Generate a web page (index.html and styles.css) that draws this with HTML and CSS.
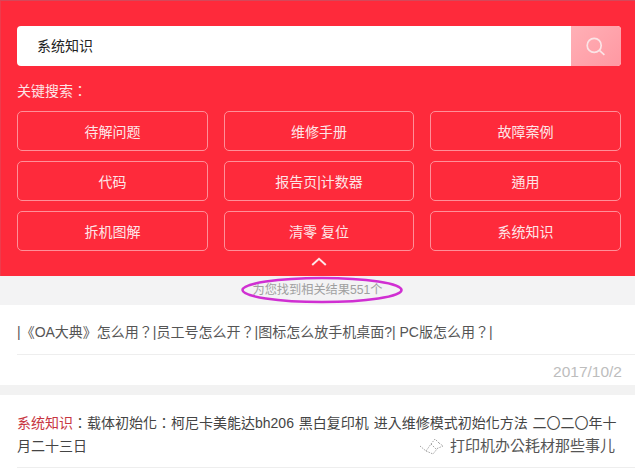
FILE: index.html
```
<!DOCTYPE html>
<html lang="zh-Hant">
<head>
<meta charset="utf-8">
<title>系统知识</title>
<link rel="stylesheet" href="styles.css">
</head>
<body>
<div class="page">
  <header class="hero">
    <div class="search">
      <div class="search-text">系统知识</div>
      <div class="search-btn">
        <svg class="search-icon" viewBox="0 0 20 20" width="20" height="20"><circle cx="8.2" cy="9.4" r="7"/><path d="M13.4 14.4 L18.4 18.8"/></svg>
      </div>
    </div>
    <div class="label">关键搜索：</div>
    <div class="tags">
      <div class="tag">待解问题</div>
      <div class="tag">维修手册</div>
      <div class="tag">故障案例</div>
      <div class="tag">代码</div>
      <div class="tag">报告页|计数器</div>
      <div class="tag">通用</div>
      <div class="tag">拆机图解</div>
      <div class="tag">清零 复位</div>
      <div class="tag">系统知识</div>
    </div>
    <div class="collapse">
      <svg viewBox="0 0 16 9" width="16" height="9"><path d="M1.2 8 L8 1.8 L14.8 8"/></svg>
    </div>
  </header>
  <div class="result-count">为您找到相关结果551个</div>
  <section class="item">
    <div class="title">|《OA大典》怎么用？|员工号怎么开？|图标怎么放手机桌面?| PC版怎么用？|</div>
    <div class="date">2017/10/2</div>
  </section>
  <section class="item item-second">
    <div class="title title-long"><span class="hl">系统知识</span>：载体初始化：柯尼卡美能达bh206 黑白复印机 进入维修模式初始化方法 二〇二〇年十月二十三日</div>
  </section>
  <svg class="ring" viewBox="0 0 164 28" width="164" height="28"><ellipse cx="82" cy="14" rx="79.5" ry="12"/></svg>
  <div class="watermark">
    <svg class="wm-icon" viewBox="0 0 26 18" width="26" height="18"><path d="M1 9 L7 14 L12 7 L16 2 L20 6 M12 7 L17 12 L24 9 M7 14 L14 17 L18 12 M20 6 L24 9"/></svg>
    <span class="wm-text">打印机办公耗材那些事儿</span>
  </div>
</div>
</body>
</html>
```
FILE: styles.css
```
* { box-sizing: border-box; }
html, body { margin: 0; padding: 0; background: #fff; }
body { font-family: "Liberation Sans", "Noto Sans CJK TC", sans-serif; }
.page { position: relative; width: 635px; height: 474px; overflow: hidden; }
.hero {
  background: #fe2a3b;
  height: 276px;
  padding: 25px 14px 0 16px;
  border-top: 1px solid #d4485a;
  border-left: 1px solid #ee3b4c;
}
.search { display: flex; height: 40px; border-radius: 4px; overflow: hidden; background: #fff; }
.search-text { flex: 1; padding-left: 20px; font-size: 14px; line-height: 40px; color: #222; }
.search-btn {
  width: 50px;
  display: flex; align-items: center; justify-content: center;
  background: linear-gradient(135deg, #ffb0b6, #ff98a2);
}
.search-icon { fill: none; stroke: #fbe4e6; stroke-width: 1.7; }
.label { margin-top: 15px; height: 20px; font-size: 14px; line-height: 20px; color: #fde3e5; }
.tags { margin-top: 10px; display: grid; grid-template-columns: 191px 190px 191px; column-gap: 16px; row-gap: 10px; grid-auto-rows: 40px; }
.tag {
  border: 1px solid #ff8f98;
  border-radius: 5px;
  display: flex; align-items: center; justify-content: center;
  font-size: 14px; color: #fde6e8;
}
.collapse { display: flex; justify-content: center; padding-top: 6px; height: 24px; }
.collapse svg { fill: none; stroke: #fde6e8; stroke-width: 2; }
.result-count { height: 29px; background: #f3f3f4; font-size: 12.2px; line-height: 29px; text-align: center; color: #a0a0a0; }
.item { padding: 0 13px 0 17px; }
.title { font-size: 14px; color: #555; }
.item .title { height: 50px; line-height: 54px; border-bottom: 1px solid #eee; margin: 0 -13px 0 0; }
.date { height: 30px; line-height: 33px; text-align: right; font-size: 15.5px; color: #bdbdbd; }
.item-second { border-top: 10px solid #f2f2f2; height: 84px; }
.item .title-long { height: 73px; padding-top: 17px; line-height: 23px; border-bottom: 1px solid #eee; color: #444; padding-right: 14px; word-spacing: 1px; }
.hl { color: #c8353f; }
.ring { position: absolute; left: 240px; top: 276px; fill: none; stroke: #d02fd2; stroke-width: 2.6; }
.watermark { position: absolute; left: 419px; top: 436px; display: flex; align-items: center; gap: 5px; }
.wm-icon { fill: none; stroke: #999; stroke-width: 0.9; stroke-dasharray: 1.5 1.2; }
.wm-text { font-size: 15px; line-height: 20px; color: #555; }
```
